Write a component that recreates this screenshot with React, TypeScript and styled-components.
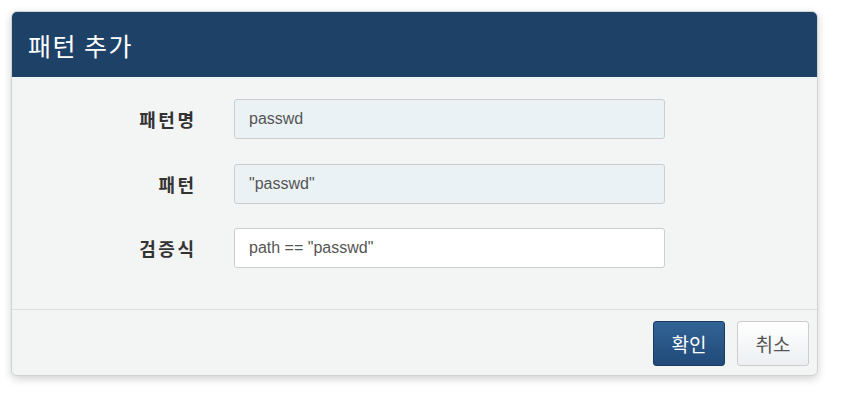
import React from 'react';
import styled, { createGlobalStyle } from 'styled-components';

const GlobalStyle = createGlobalStyle`
  html, body {
    margin: 0;
    padding: 0;
    background: #ffffff;
  }
  body {
    font-family: 'Liberation Sans', 'Noto Sans CJK KR', sans-serif;
  }
`;

const Page = styled.div`
  padding: 11px 23px 22px 11px;
`;

const Dialog = styled.div`
  border: 1px solid #cfd3d6;
  border-radius: 6px;
  background: #f3f4f4;
  box-shadow: 0 3px 9px rgba(0, 0, 0, 0.18);
  overflow: hidden;
`;

const Header = styled.div`
  height: 65px;
  background: #1e4168;
  display: flex;
  align-items: center;
  padding: 0 16px;
`;

const Title = styled.h3`
  margin: 0;
  color: #ffffff;
  font-family: 'Noto Sans CJK KR', sans-serif;
  font-weight: 400;
  font-size: 25px;
  letter-spacing: 1.5px;
`;

const Body = styled.div`
  padding: 22px 0 41px;
  display: grid;
  grid-template-columns: 182px 431px;
  column-gap: 40px;
  row-gap: 24.5px;
  align-items: center;
`;

const Label = styled.label`
  text-align: right;
  font-family: 'Noto Sans CJK KR', sans-serif;
  font-weight: 700;
  font-size: 18px;
  letter-spacing: 2.5px;
  margin-right: -2.5px;
  color: #333333;
`;

const Field = styled.input<{ $readOnly?: boolean }>`
  box-sizing: border-box;
  width: 100%;
  height: 40px;
  padding: 0 14px;
  border: 1px solid #cccccc;
  border-radius: 3px;
  background: ${({ $readOnly }) => ($readOnly ? '#eaf2f5' : '#ffffff')};
  color: #555555;
  font-family: 'Liberation Sans', sans-serif;
  font-size: 16px;
  outline: none;
`;

const Footer = styled.div`
  border-top: 1px solid #dcdfe1;
  display: flex;
  justify-content: flex-end;
  gap: 12px;
  padding: 11px 8px 9px;
`;

const Button = styled.button<{ $primary?: boolean }>`
  width: 72px;
  height: 45px;
  border-radius: 3px;
  font-family: 'Noto Sans CJK KR', sans-serif;
  font-size: 19px;
  cursor: pointer;
  border: 1px solid ${({ $primary }) => ($primary ? '#1b3c61' : '#cccccc')};
  color: ${({ $primary }) => ($primary ? '#ffffff' : '#555555')};
  background: ${({ $primary }) =>
    $primary
      ? 'linear-gradient(to bottom, #326395 0%, #204a78 100%)'
      : 'linear-gradient(to bottom, #ffffff 0%, #eceff2 100%)'};
`;

const App = () => {
  return (
    <>
      <GlobalStyle />
      <Page>
        <Dialog>
          <Header>
            <Title>패턴 추가</Title>
          </Header>
          <Body>
            <Label>패턴명</Label>
            <Field $readOnly readOnly value="passwd" />
            <Label>패턴</Label>
            <Field $readOnly readOnly value={'"passwd"'} />
            <Label>검증식</Label>
            <Field defaultValue={'path == "passwd"'} />
          </Body>
          <Footer>
            <Button $primary>확인</Button>
            <Button>취소</Button>
          </Footer>
        </Dialog>
      </Page>
    </>
  );
};

export default App;
